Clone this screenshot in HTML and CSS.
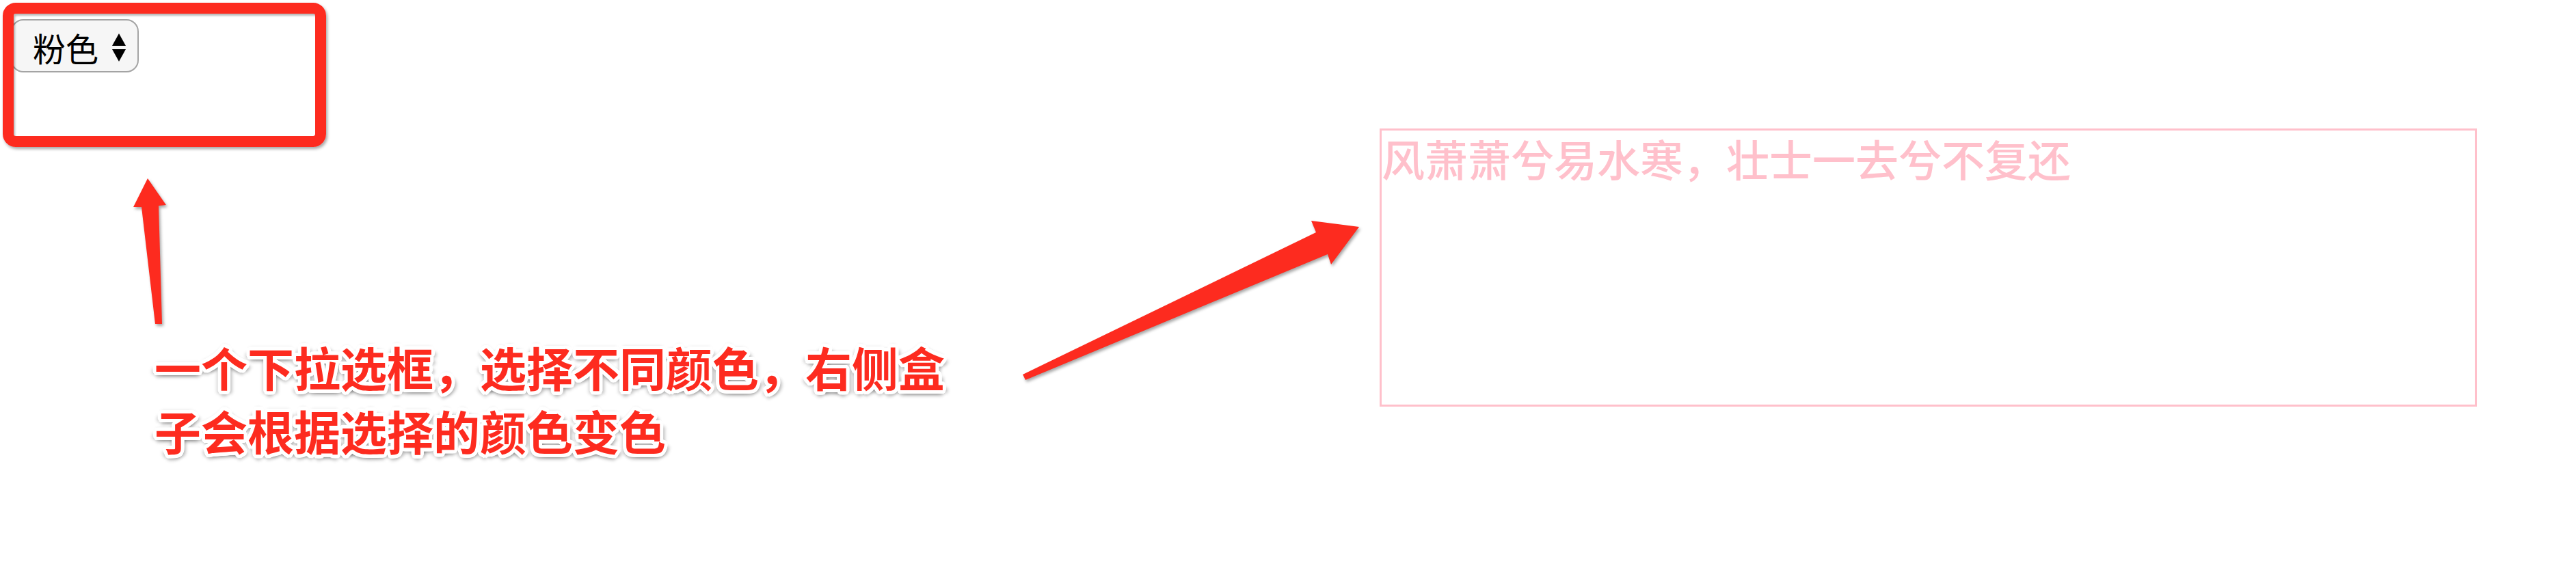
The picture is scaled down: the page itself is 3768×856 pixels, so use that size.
FILE: index.html
```html
<!DOCTYPE html>
<html lang="zh-CN">
<head>
<meta charset="utf-8">
<title>下拉选框变色</title>
<link rel="stylesheet" href="styles.css">
</head>
<body>
<main class="page">
  <div class="picker">
    <select class="color-select">
      <option>粉色</option>
      <option>红色</option>
      <option>蓝色</option>
      <option>绿色</option>
    </select>
    <svg class="picker-arrows" viewBox="0 0 22 42" width="22" height="42" aria-hidden="true">
      <polygon points="1,18 11,0 21,18" fill="#000"/>
      <polygon points="1,23 21,23 11,41" fill="#000"/>
    </svg>
  </div>
  <div class="poem">风萧萧兮易水寒，壮士一去兮不复还</div>
</main>

<div class="annot-frame" aria-hidden="true"></div>
<svg class="annot-arrows" width="3768" height="856" viewBox="0 0 3768 856" aria-hidden="true">
  <polygon points="216,261 243,300 232,301 237,474 227,474 207,303 195,303" fill="#fd2b1f"/>
  <polygon points="1496,548 1925,340 1918,323 1988,332 1947,387 1942,372 1500,556" fill="#fd2b1f"/>
</svg>
<p class="annot-note">一个下拉选框，选择不同颜色，右侧盒子会根据选择的颜色变色</p>
</body>
</html>
```

FILE: styles.css
```css
html, body {
  margin: 0;
  padding: 0;
  background: #ffffff;
}

body {
  width: 3768px;
  height: 856px;
  position: relative;
  overflow: hidden;
  font-family: "Noto Sans CJK SC", "Noto Sans", sans-serif;
}

.page {
  display: flex;
  align-items: flex-start;
  padding: 28px 0 0 16px;
}

.picker {
  position: relative;
  width: 187px;
  height: 78px;
  flex: none;
}

.color-select {
  -webkit-appearance: none;
  appearance: none;
  box-sizing: border-box;
  width: 187px;
  height: 78px;
  margin: 0;
  padding: 4px 0 0 30px;
  border: 2px solid #a4a4a4;
  border-radius: 18px;
  background: #f6f6f6;
  color: #000;
  font-family: "Noto Sans CJK SC", sans-serif;
  font-size: 48px;
  font-weight: 400;
  outline: none;
}

.picker-arrows {
  position: absolute;
  left: 147px;
  top: 21px;
  pointer-events: none;
}

.poem {
  box-sizing: border-box;
  flex: none;
  width: 1605px;
  height: 407px;
  margin: 160px 0 0 1815px;
  border: 3px solid pink;
  color: pink;
  font-family: "Noto Sans CJK SC", sans-serif;
  font-size: 63px;
  font-weight: 500;
  line-height: 1.28;
  white-space: nowrap;
}

/* annotation overlay */
.annot-frame {
  position: absolute;
  left: 4px;
  top: 4px;
  width: 473px;
  height: 211px;
  box-sizing: border-box;
  border: 16px solid #fd2b1f;
  border-radius: 19px;
  box-shadow: 2px 3px 4px rgba(0, 0, 0, 0.35), inset 2px 3px 3px rgba(0, 0, 0, 0.28);
  pointer-events: none;
}

.annot-arrows {
  position: absolute;
  left: 0;
  top: 0;
  pointer-events: none;
  filter: drop-shadow(2px 3px 2px rgba(0, 0, 0, 0.35));
}

.annot-note {
  position: absolute;
  left: 226px;
  top: 490px;
  width: 1170px;
  margin: 0;
  color: #fd2b1f;
  font-family: "Noto Sans CJK SC", sans-serif;
  font-weight: 700;
  font-size: 68px;
  line-height: 93px;
  text-shadow:
    5px 0 0 #fff, -5px 0 0 #fff, 0 5px 0 #fff, 0 -5px 0 #fff,
    3.6px 3.6px 0 #fff, -3.6px 3.6px 0 #fff, 3.6px -3.6px 0 #fff, -3.6px -3.6px 0 #fff,
    4.6px 1.9px 0 #fff, -4.6px 1.9px 0 #fff, 4.6px -1.9px 0 #fff, -4.6px -1.9px 0 #fff,
    1.9px 4.6px 0 #fff, -1.9px 4.6px 0 #fff, 1.9px -4.6px 0 #fff, -1.9px -4.6px 0 #fff,
    0 8px 5px rgba(0, 0, 0, 0.28), 7px 4px 5px rgba(0, 0, 0, 0.28),
    -6px 4px 5px rgba(0, 0, 0, 0.22), 0 -4px 5px rgba(0, 0, 0, 0.16);
}
```
